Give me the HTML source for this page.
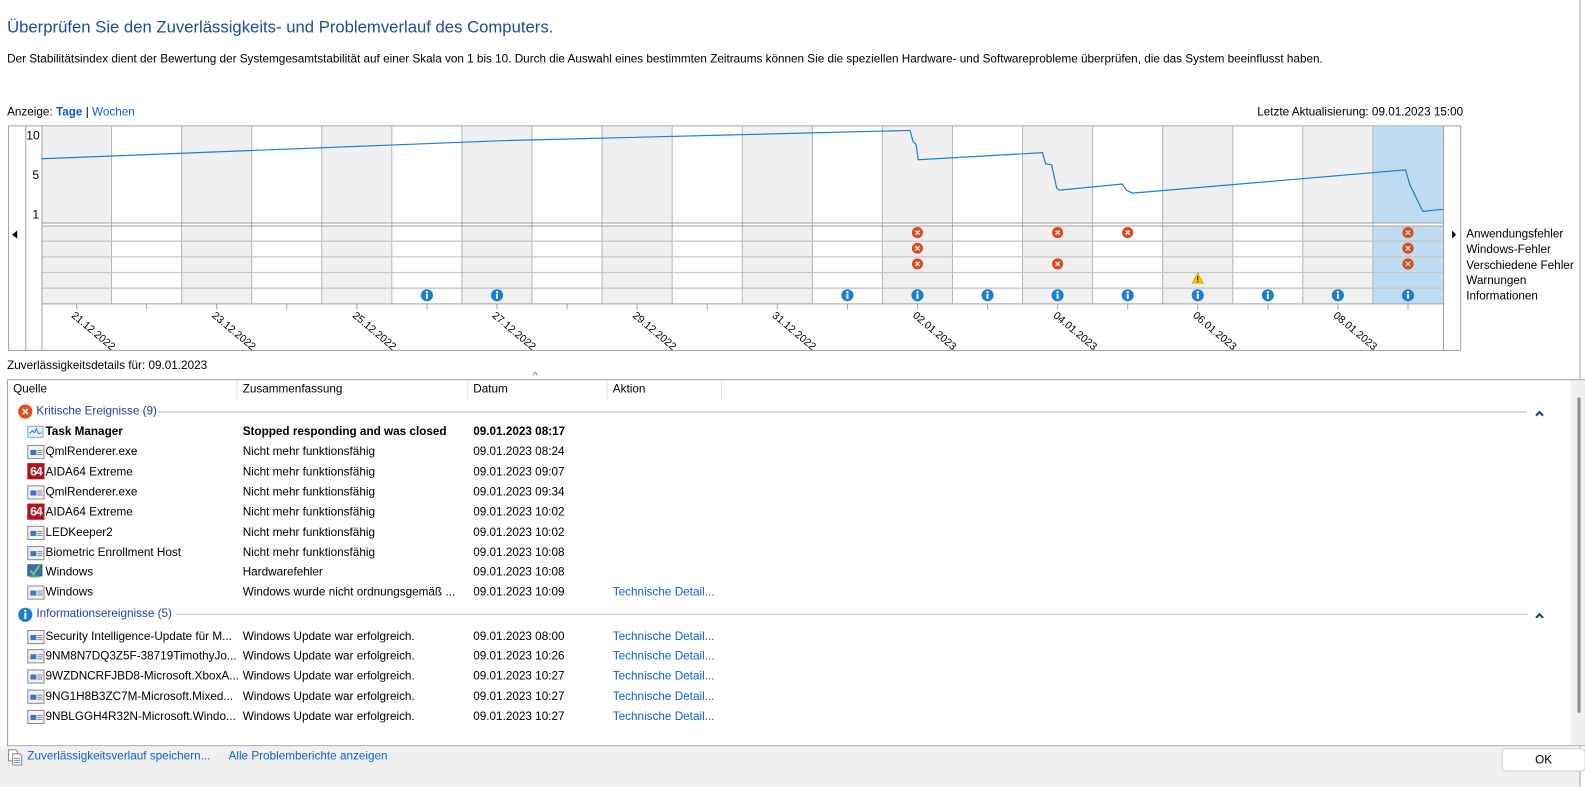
<!DOCTYPE html>
<html><head><meta charset="utf-8"><style>
*{margin:0;padding:0;box-sizing:border-box}
body{width:1585px;height:778px;background:#fff;font-family:"Liberation Sans",sans-serif;font-size:11.6px;color:#000;position:relative;overflow:hidden}
#w{position:absolute;left:0;top:0;width:1568px;height:770px;transform:scale(1.0112);transform-origin:0 0}
.a{position:absolute;white-space:nowrap}
.lnk{color:#0b62cf}
.ic{position:absolute;width:17px;height:14px;border:1px solid #8a8a8a;background:#f4f4f4}
.ic:before{content:"";position:absolute;left:2px;top:4px;width:6px;height:5px;background:#3a78c8}
.ic:after{content:"";position:absolute;left:9px;top:4px;width:5px;height:1px;background:#888;box-shadow:0 2px #888,0 4px #888}
.aida{position:absolute;width:17px;height:16px;background:#b3141b;color:#fff;font-weight:bold;font-size:12px;line-height:16px;text-align:center;letter-spacing:-1px}
</style></head><body><div id="w">
<div class="a" style="left:7px;top:18px;font-size:16.5px;color:#1a4c9c">Überprüfen Sie den Zuverlässigkeits- und Problemverlauf des Computers.</div>
<div class="a" style="left:7px;top:52px">Der Stabilitätsindex dient der Bewertung der Systemgesamtstabilität auf einer Skala von 1 bis 10. Durch die Auswahl eines bestimmten Zeitraums können Sie die speziellen Hardware- und Softwareprobleme überprüfen, die das System beeinflusst haben.</div>
<div class="a" style="left:7px;top:104px">Anzeige: <span class="lnk" style="color:#0a5bc4;font-weight:bold">Tage</span> | <span class="lnk">Wochen</span></div>
<div class="a" style="right:121px;top:104px">Letzte Aktualisierung: 09.01.2023 15:00</div>
<div style="position:absolute;left:1562px;top:0;width:1px;height:778px;background:#a0a0a0"></div>

<svg class="a" style="left:0;top:0" width="1585" height="360" font-family="Liberation Sans, sans-serif">
<rect x="8.5" y="124.5" width="1436" height="222" fill="#fff" stroke="#a0a0a0"/>
<g fill="#f0f0f0">
<rect x="41" y="125" width="69.3" height="175"/><rect x="179.6" y="125" width="69.3" height="175"/><rect x="318.2" y="125" width="69.3" height="175"/><rect x="456.8" y="125" width="69.3" height="175"/><rect x="595.4" y="125" width="69.3" height="175"/><rect x="734" y="125" width="69.3" height="175"/><rect x="872.6" y="125" width="69.3" height="175"/><rect x="1011.2" y="125" width="69.3" height="175"/><rect x="1149.8" y="125" width="69.3" height="175"/><rect x="1288.4" y="125" width="69.3" height="175"/>
</g>
<rect x="1358" y="125" width="69" height="175" fill="#c0dcf3"/>
<rect x="41" y="220" width="1386" height="3" fill="#fff"/>
<g stroke="#b4b4b4" stroke-width="1">
<path d="M110.3 125V300M179.6 125V300M248.9 125V300M318.2 125V300M387.5 125V300M456.8 125V300M526.1 125V300M595.4 125V300M664.7 125V300M734 125V300M803.3 125V300M872.6 125V300M941.9 125V300M1011.2 125V300M1080.5 125V300M1149.8 125V300M1219.1 125V300M1288.4 125V300M1357.7 125V300"/>
<path d="M41 238.5H1427M41 254H1427M41 269.5H1427M41 285H1427" stroke="#c8c8c8" stroke-width="1.3"/>
</g>
<g stroke="#a0a0a0">
<path d="M25.5 124V347M41.5 124V347M1427.5 124V347M41 220.5H1427M41 223.5H1427M41 300.5H1427"/>
<path d="M75.7 301v5M145 301v5M214.3 301v5M283.6 301v5M352.9 301v5M422.2 301v5M491.5 301v5M560.8 301v5M630.1 301v5M699.4 301v5M768.7 301v5M838 301v5M907.3 301v5M976.6 301v5M1045.9 301v5M1115.2 301v5M1184.5 301v5M1253.8 301v5M1323.1 301v5M1392.4 301v5"/>
</g>
<g font-size="12"><text x="26" y="138">10</text><text x="32" y="177">5</text><text x="32" y="216">1</text></g>
<path d="M12 232l5-4v8z" fill="#000"/><path d="M1440 232l-4-4v8z" fill="#000"/>
<polyline fill="none" stroke="#1c7ed6" stroke-width="1.2" points="41,157 500,139 900,129 903,140 906,143 908,158 1031,151 1034,162 1040,163 1045,186 1048,188 1110,182 1114,188 1120,191 1390,168 1394,182 1407,209 1427,207"/>
<g font-size="10.5" fill="#000">
<text transform="translate(70,313) rotate(40)">21.12.2022</text>
<text transform="translate(209,313) rotate(40)">23.12.2022</text>
<text transform="translate(348,313) rotate(40)">25.12.2022</text>
<text transform="translate(486,313) rotate(40)">27.12.2022</text>
<text transform="translate(625,313) rotate(40)">29.12.2022</text>
<text transform="translate(763,313) rotate(40)">31.12.2022</text>
<text transform="translate(902,313) rotate(40)">02.01.2023</text>
<text transform="translate(1041,313) rotate(40)">04.01.2023</text>
<text transform="translate(1179,313) rotate(40)">06.01.2023</text>
<text transform="translate(1318,313) rotate(40)">08.01.2023</text>
</g>
<defs>
<g id="e"><circle r="5.5" fill="#dd4b1a"/><path d="M-2-2L2 2M2-2L-2 2" stroke="#fff" stroke-width="1.3"/></g>
<g id="i"><circle r="6" fill="#1a7fd4"/><rect x="-1" y="-1.5" width="2" height="5" fill="#fff"/><rect x="-1" y="-4" width="2" height="1.8" fill="#fff"/></g>
</defs>
<use href="#e" x="907.3" y="230"/><use href="#e" x="1045.9" y="230"/><use href="#e" x="1115.2" y="230"/><use href="#e" x="1392.4" y="230"/>
<use href="#e" x="907.3" y="245.5"/><use href="#e" x="1392.4" y="245.5"/>
<use href="#e" x="907.3" y="261"/><use href="#e" x="1045.9" y="261"/><use href="#e" x="1392.4" y="261"/>
<path d="M1184.5 270l5.5 10h-11z" fill="#f5c400" stroke="#c89a00" stroke-width=".6"/><rect x="1184" y="273" width="1" height="4" fill="#000"/><rect x="1184" y="278" width="1" height="1" fill="#000"/>
<g><use href="#i" x="422.2" y="292"/><use href="#i" x="491.5" y="292"/><use href="#i" x="838" y="292"/><use href="#i" x="907.3" y="292"/><use href="#i" x="976.6" y="292"/><use href="#i" x="1045.9" y="292"/><use href="#i" x="1115.2" y="292"/><use href="#i" x="1184.5" y="292"/><use href="#i" x="1253.8" y="292"/><use href="#i" x="1323.1" y="292"/><use href="#i" x="1392.4" y="292"/></g>
<g font-size="11.6"><text x="1450" y="235">Anwendungsfehler</text><text x="1450" y="250">Windows-Fehler</text><text x="1450" y="266">Verschiedene Fehler</text><text x="1450" y="281">Warnungen</text><text x="1450" y="296">Informationen</text></g>
</svg>

<div class="a" style="left:7px;top:355px">Zuverlässigkeitsdetails für: 09.01.2023</div>
<div style="position:absolute;left:7px;top:375px;width:1563px;height:363px;border:1px solid #a0a0a0;background:#fff"></div>
<div style="position:absolute;left:1553px;top:376px;width:16px;height:361px;background:#f0f0f0"></div>
<div style="position:absolute;left:1560px;top:393px;width:3px;height:312px;background:#8a8a8a;border-radius:2px"></div>
<div style="position:absolute;left:234px;top:376px;width:1px;height:19px;background:#e5e5e5"></div>
<div style="position:absolute;left:462px;top:376px;width:1px;height:19px;background:#e5e5e5"></div>
<div style="position:absolute;left:600px;top:376px;width:1px;height:19px;background:#e5e5e5"></div>
<div style="position:absolute;left:713px;top:376px;width:1px;height:19px;background:#e5e5e5"></div>
<div class="a" style="left:13px;top:378px">Quelle</div>
<div class="a" style="left:240px;top:378px">Zusammenfassung</div>
<div class="a" style="left:468px;top:378px">Datum</div>
<div class="a" style="left:606px;top:378px">Aktion</div>
<div class="a" style="left:527px;top:367px;font-size:10px;color:#666">^</div>

<svg class="a" style="left:0;top:0" width="1585" height="778">
<circle cx="25" cy="407" r="7" fill="#e0501f"/><path d="M22.5 404.5l5 5M27.5 404.5l-5 5" stroke="#fff" stroke-width="1.5"/>
<path d="M156 407.5H1510M174 607.5H1510" stroke="#a9bde6"/>
<circle cx="25" cy="608" r="7" fill="#1a7fd4"/><rect x="24" y="606" width="2" height="6" fill="#fff"/><rect x="24" y="603" width="2" height="2" fill="#fff"/>
<path d="M1519 411l3.5-3.5 3.5 3.5M1519 611l3.5-3.5 3.5 3.5" stroke="#1a3a8a" stroke-width="2" fill="none"/>
<rect x="27.5" y="421.5" width="15" height="11" fill="#eaf2fc" stroke="#8ca4c8"/><polyline points="29,429 32,426 34,428 36,424 38,429 41,428" fill="none" stroke="#2a7ad0"/>
<rect x="27.5" y="558.5" width="14" height="11" fill="#3a6ac8" stroke="#555"/><path d="M30 564l3 4 6-9" stroke="#6c6" stroke-width="2" fill="none"/><rect x="29" y="569" width="10" height="2" fill="#5a5"/>
</svg>
<div class="a" style="left:36px;top:400px;color:#1f3fa8">Kritische Ereignisse (9)</div>
<div class="a" style="left:36px;top:600px;color:#1f3fa8">Informationsereignisse (5)</div>

<div class="a" style="left:45px;top:420px;font-weight:bold">Task Manager</div>
<div class="a" style="left:240px;top:420px;font-weight:bold">Stopped responding and was closed</div>
<div class="a" style="left:468px;top:420px;font-weight:bold">09.01.2023 08:17</div>

<div class="ic" style="left:27px;top:440px"></div><div class="a" style="left:45px;top:440px">QmlRenderer.exe</div><div class="a" style="left:240px;top:440px">Nicht mehr funktionsfähig</div><div class="a" style="left:468px;top:440px">09.01.2023 08:24</div>
<div class="aida" style="left:27px;top:458px">64</div><div class="a" style="left:45px;top:460px">AIDA64 Extreme</div><div class="a" style="left:240px;top:460px">Nicht mehr funktionsfähig</div><div class="a" style="left:468px;top:460px">09.01.2023 09:07</div>
<div class="ic" style="left:27px;top:480px"></div><div class="a" style="left:45px;top:480px">QmlRenderer.exe</div><div class="a" style="left:240px;top:480px">Nicht mehr funktionsfähig</div><div class="a" style="left:468px;top:480px">09.01.2023 09:34</div>
<div class="aida" style="left:27px;top:498px">64</div><div class="a" style="left:45px;top:500px">AIDA64 Extreme</div><div class="a" style="left:240px;top:500px">Nicht mehr funktionsfähig</div><div class="a" style="left:468px;top:500px">09.01.2023 10:02</div>
<div class="ic" style="left:27px;top:520px"></div><div class="a" style="left:45px;top:520px">LEDKeeper2</div><div class="a" style="left:240px;top:520px">Nicht mehr funktionsfähig</div><div class="a" style="left:468px;top:520px">09.01.2023 10:02</div>
<div class="ic" style="left:27px;top:540px"></div><div class="a" style="left:45px;top:540px">Biometric Enrollment Host</div><div class="a" style="left:240px;top:540px">Nicht mehr funktionsfähig</div><div class="a" style="left:468px;top:540px">09.01.2023 10:08</div>
<div class="a" style="left:45px;top:559px">Windows</div><div class="a" style="left:240px;top:559px">Hardwarefehler</div><div class="a" style="left:468px;top:559px">09.01.2023 10:08</div>
<div class="ic" style="left:27px;top:579px"></div><div class="a" style="left:45px;top:579px">Windows</div><div class="a" style="left:240px;top:579px">Windows wurde nicht ordnungsgemäß ...</div><div class="a" style="left:468px;top:579px">09.01.2023 10:09</div><div class="a lnk" style="left:606px;top:579px">Technische Detail...</div>

<div class="ic" style="left:27px;top:623px"></div><div class="a" style="left:45px;top:623px">Security Intelligence-Update für M...</div><div class="a" style="left:240px;top:623px">Windows Update war erfolgreich.</div><div class="a" style="left:468px;top:623px">09.01.2023 08:00</div><div class="a lnk" style="left:606px;top:623px">Technische Detail...</div>
<div class="ic" style="left:27px;top:642px"></div><div class="a" style="left:45px;top:642px">9NM8N7DQ3Z5F-38719TimothyJo...</div><div class="a" style="left:240px;top:642px">Windows Update war erfolgreich.</div><div class="a" style="left:468px;top:642px">09.01.2023 10:26</div><div class="a lnk" style="left:606px;top:642px">Technische Detail...</div>
<div class="ic" style="left:27px;top:662px"></div><div class="a" style="left:45px;top:662px">9WZDNCRFJBD8-Microsoft.XboxA...</div><div class="a" style="left:240px;top:662px">Windows Update war erfolgreich.</div><div class="a" style="left:468px;top:662px">09.01.2023 10:27</div><div class="a lnk" style="left:606px;top:662px">Technische Detail...</div>
<div class="ic" style="left:27px;top:682px"></div><div class="a" style="left:45px;top:682px">9NG1H8B3ZC7M-Microsoft.Mixed...</div><div class="a" style="left:240px;top:682px">Windows Update war erfolgreich.</div><div class="a" style="left:468px;top:682px">09.01.2023 10:27</div><div class="a lnk" style="left:606px;top:682px">Technische Detail...</div>
<div class="ic" style="left:27px;top:702px"></div><div class="a" style="left:45px;top:702px">9NBLGGH4R32N-Microsoft.Windo...</div><div class="a" style="left:240px;top:702px">Windows Update war erfolgreich.</div><div class="a" style="left:468px;top:702px">09.01.2023 10:27</div><div class="a lnk" style="left:606px;top:702px">Technische Detail...</div>

<div style="position:absolute;left:0;top:738px;width:1562px;height:40px;background:#f0f0f0"></div>
<svg class="a" style="left:7px;top:740px" width="16" height="18"><path d="M1.5 1.5h7l2 2v9h-9z" fill="#fff" stroke="#888"/><path d="M5.5 5.5h7l2 2v9h-9z" fill="#fff" stroke="#888"/><path d="M7 10h6M7 12h6M7 14h6" stroke="#6a8fd0"/></svg>
<div class="a lnk" style="left:27px;top:741px">Zuverlässigkeitsverlauf speichern...</div>
<div class="a lnk" style="left:226px;top:741px">Alle Problemberichte anzeigen</div>
<div style="position:absolute;left:1485px;top:740px;width:83px;height:23px;background:#fdfdfd;border:1px solid #d0d0d0;border-radius:4px;text-align:center;line-height:21px">OK</div>
</div></body></html>
